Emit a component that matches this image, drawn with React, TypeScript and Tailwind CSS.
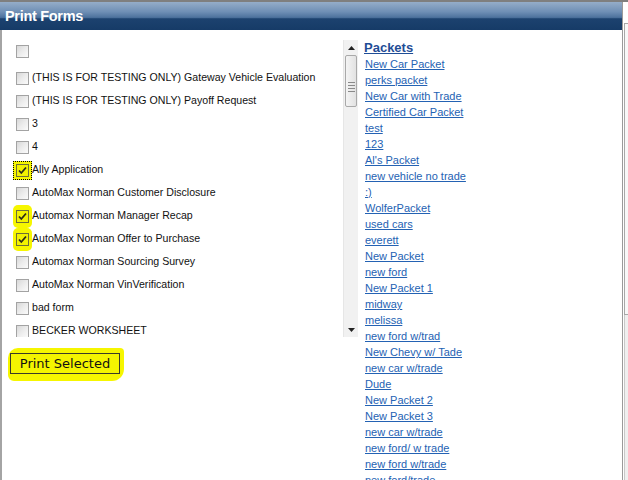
import React from 'react';

type Form = { label: string; checked?: boolean; focus?: boolean; marker?: boolean };

const forms: Form[] = [
  { label: '' },
  { label: '(THIS IS FOR TESTING ONLY) Gateway Vehicle Evaluation' },
  { label: '(THIS IS FOR TESTING ONLY) Payoff Request' },
  { label: '3' },
  { label: '4' },
  { label: 'Ally Application', checked: true, focus: true },
  { label: 'AutoMax Norman Customer Disclosure' },
  { label: 'Automax Norman Manager Recap', checked: true, marker: true },
  { label: 'AutoMax Norman Offer to Purchase', checked: true, marker: true },
  { label: 'Automax Norman Sourcing Survey' },
  { label: 'AutoMax Norman VinVerification' },
  { label: 'bad form' },
  { label: 'BECKER WORKSHEET' },
];

const packets = [
  'New Car Packet',
  'perks packet',
  'New Car with Trade',
  'Certified Car Packet',
  'test',
  '123',
  "Al's Packet",
  'new vehicle no trade',
  ':)',
  'WolferPacket',
  'used cars',
  'everett',
  'New Packet',
  'new ford',
  'New Packet 1',
  'midway',
  'melissa',
  'new ford w/trad',
  'New Chevy w/ Tade',
  'new car w/trade',
  'Dude',
  'New Packet 2',
  'New Packet 3',
  'new car w/trade',
  'new ford/ w trade',
  'new ford w/trade',
  'new ford/trade',
];

const CheckBox = ({ checked, focus, marker }: { checked?: boolean; focus?: boolean; marker?: boolean }) => (
  <span className="relative inline-flex w-[13px] h-[13px] shrink-0">
    {marker && <span className="absolute -left-[3px] -right-[3px] -top-[5px] -bottom-[5px] bg-[#f6f600] rounded-[5px]" />}
    {focus && <span className="absolute -left-[3px] -right-[3px] -top-[3px] -bottom-[3px] bg-[#f6f600] border border-dotted border-black" />}
    {checked ? (
      <span className="relative w-[13px] h-[13px] border border-[#6e6e3a] bg-[#f2f200] flex items-center justify-center">
        <svg width="9" height="9" viewBox="0 0 9 9">
          <path d="M1 4.5 L3.3 7 L8 1.5" fill="none" stroke="#2b2b1a" strokeWidth="1.8" />
        </svg>
      </span>
    ) : (
      <span className="relative w-[13px] h-[13px] border border-[#a3a3a3] bg-[linear-gradient(135deg,#d8d8d8_0%,#ececec_50%,#fbfbfb_100%)]" />
    )}
  </span>
);

const ScrollBar = () => (
  <div className="w-[15px] flex flex-col bg-[#f1f1f1] border-l border-[#e6e6e6]">
    <div className="h-[15px] flex items-center justify-center">
      <svg width="7" height="4" viewBox="0 0 7 4">
        <path d="M0 4 L3.5 0 L7 4 Z" fill="#222" />
      </svg>
    </div>
    <div className="mx-[1px] h-[52px] rounded-[2px] border border-[#a9a9a9] bg-[linear-gradient(to_right,#f4f4f4,#e2e2e2)] flex flex-col items-center justify-center gap-[2px] pt-[12px]">
      <span className="w-[7px] h-[1px] bg-[#8a8a8a]" />
      <span className="w-[7px] h-[1px] bg-[#8a8a8a]" />
      <span className="w-[7px] h-[1px] bg-[#8a8a8a]" />
      <span className="w-[7px] h-[1px] bg-[#8a8a8a]" />
    </div>
    <div className="flex-1" />
    <div className="h-[15px] flex items-center justify-center">
      <svg width="7" height="4" viewBox="0 0 7 4">
        <path d="M0 0 L3.5 4 L7 0 Z" fill="#222" />
      </svg>
    </div>
  </div>
);

export default function App() {
  return (
    <div className="w-[628px] h-[480px] overflow-hidden bg-white flex flex-col font-['Liberation_Sans',Arial,sans-serif]">
      <div className="h-[2px] bg-[#7f7f7f]" />
      <div className="flex flex-1 min-h-0">
        <div className="flex-1 flex flex-col min-w-0">
          <div className="h-[28px] bg-[linear-gradient(to_bottom,#95adc9_0%,#6f8fb5_35%,#4d729d_55%,#1c426f_60%,#163b67_100%)] flex items-center pl-[5px] pt-[1px]">
            <span className="text-white text-[14.5px] font-bold tracking-[-0.3px]">Print Forms</span>
          </div>
          <div className="flex-1 min-h-0 border-l-2 border-[#a4a4a4] flex">
            <div className="w-[356px] flex flex-col pt-[10px] pl-[8px]">
              <div className="flex h-[297px]">
                <div className="flex-1 pl-[6px] overflow-hidden">
                  {forms.map((f, i) => (
                    <div
                      key={i}
                      className={`h-[23px] flex items-center gap-[3px] text-[10.6px] text-[#111] whitespace-nowrap ${i === 0 ? 'mb-[4px]' : ''}`}
                    >
                      <CheckBox checked={f.checked} focus={f.focus} marker={f.marker} />
                      <span className="-mt-[1px]">{f.label}</span>
                    </div>
                  ))}
                </div>
                <ScrollBar />
              </div>
              <div className="relative mt-[16px] w-[110px]">
                <div className="absolute -left-[2px] -right-[4px] -top-[5px] -bottom-[7px] bg-[#f6f600] rounded-tl-[10px] rounded-tr-[4px] rounded-br-[12px] rounded-bl-[6px]" />
                <button className="relative w-[110px] h-[21px] border border-[#3a3a2a] bg-[#f4f400] text-[13px] text-[#111] font-['DejaVu_Sans',Verdana,sans-serif] leading-none flex items-center justify-center">
                  Print Selected
                </button>
              </div>
            </div>
            <div className="flex-1 pl-[6px] pt-[10px] overflow-hidden">
              <div className="text-[13px] font-bold leading-[16px] text-[#1f4d96] underline">Packets</div>
              {packets.map((p, i) => (
                <div key={i} className="text-[11px] leading-[16px] pl-[1px] whitespace-nowrap">
                  <a href="#" className="text-[#2462b3] underline">
                    {p}
                  </a>
                </div>
              ))}
            </div>
          </div>
        </div>
        <div className="w-[6px] flex flex-col border-l border-[#9a9a9a] pl-[1px]">
          <div className="h-[21px]" />
          <div className="h-[292px] border border-r-0 border-[#a8a8a8] bg-[#f8f8f8]" />
          <div className="flex-1 border-l border-[#c8c8c8] bg-[#efefef]" />
        </div>
      </div>
    </div>
  );
}
